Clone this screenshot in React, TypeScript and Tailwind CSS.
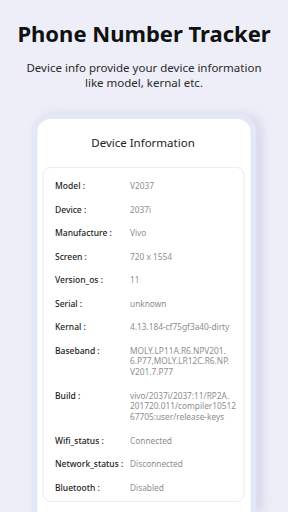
const rows: { label: string; value: string[] }[] = [
  { label: 'Model :', value: ['V2037'] },
  { label: 'Device :', value: ['2037i'] },
  { label: 'Manufacture :', value: ['Vivo'] },
  { label: 'Screen :', value: ['720 x 1554'] },
  { label: 'Version_os :', value: ['11'] },
  { label: 'Serial :', value: ['unknown'] },
  { label: 'Kernal :', value: ['4.13.184-cf75gf3a40-dirty'] },
  { label: 'Baseband :', value: ['MOLY.LP11A.R6.NPV201.', '6.P77,MOLY.LR12C.R6.NP.', 'V201.7.P77'] },
  { label: 'Build :', value: ['vivo/2037i/2037:11/RP2A.', '201720.011/compiler10512', '67705:user/release-keys'] },
  { label: 'Wifi_status :', value: ['Connected'] },
  { label: 'Network_status :', value: ['Disconnected'] },
  { label: 'Bluetooth :', value: ['Disabled'] },
];

export default function App() {
  return (
    <div
      className="h-[512px] w-[288px] overflow-hidden bg-[#edeef7] flex flex-col items-center"
      style={{ fontFamily: '"Noto Sans", "Open Sans", sans-serif' }}
    >
      <h1 className="mt-[19px] text-[22px] leading-[28px] font-bold text-[#111111]">Phone Number Tracker</h1>
      <p className="mt-[13px] text-[11.5px] leading-[15px] text-[#2a2a2a] text-center">
        Device info provide your device information
        <br />
        like model, kernal etc.
      </p>

      {/* phone frame */}
      <div className="mt-[24px] w-[225px] flex-1 rounded-t-[18px] bg-[#e4e7f6] px-[6px] pt-[5px] shadow-[6px_0_10px_rgba(200,204,228,0.6)] -translate-x-[0.5px]">
        <div className="h-full rounded-t-[13px] bg-white pl-[5px] pr-[6px]">
          <div className="h-[48px] flex items-center justify-center text-[11.5px] text-[#222222]">Device Information</div>
          <div className="rounded-[8px] border border-[#ebebf0] pl-[12px] pt-[13px] pb-[8px] flex flex-col gap-[13.5px]">
            {rows.map((r) => (
              <div key={r.label} className="flex leading-[10px]">
                <div className="w-[75px] shrink-0 text-[8.5px] font-medium text-[#1c1c1c]">{r.label}</div>
                <div className="text-[8.3px] text-[#8e8e8e]">
                  {r.value.map((v, i) => (
                    <div key={i} className={r.value.length > 1 ? 'leading-[10.5px]' : ''}>
                      {v}
                    </div>
                  ))}
                </div>
              </div>
            ))}
          </div>
        </div>
      </div>
    </div>
  );
}
